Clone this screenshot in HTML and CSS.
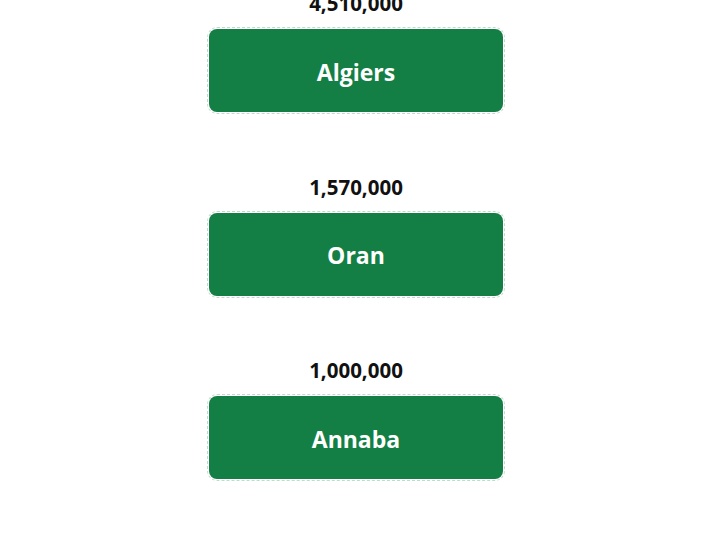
FILE: index.html
```html
<!DOCTYPE html>
<html lang="en">
<head>
    <meta charset="UTF-8">
    <meta name="viewport" content="width=device-width, initial-scale=1.0">
    <title>Cities</title>
    <link rel="stylesheet" href="styles.css">
</head>
<body>
  <div class="city-list">
    <div class="city">
      <div class="population">4,510,000</div>
      <button class="city-btn">Algiers</button>
    </div>

    <div class="city">
      <div class="population">1,570,000</div>
      <button class="city-btn">Oran</button>
    </div>

    <div class="city">
      <div class="population">1,000,000</div>
      <button class="city-btn">Annaba</button>
    </div>
  </div>
</body>
</html>
```

FILE: styles.css
```css
* {
    margin: 0;
    padding: 0;
    box-sizing: border-box;
}

body {
    font-family: 'Open Sans', 'Noto Sans', sans-serif;
    background: #ffffff;
    color: #111111;
    overflow: hidden;
}

.city-list {
    display: flex;
    flex-direction: column;
    align-items: center;
    margin-top: -9px;
    padding-left: 2px;
}

.city {
    display: flex;
    flex-direction: column;
    align-items: center;
    padding-bottom: 62.5px;
}

.population {
    font-size: 20.5px;
    font-weight: 700;
    line-height: 24px;
    margin-bottom: 14px;
}

.city-btn {
    width: 294px;
    height: 83px;
    padding-top: 2px;
    font-family: inherit;
    font-size: 23px;
    font-weight: 700;
    color: #ffffff;
    background: #137f45;
    border: none;
    border-radius: 8px;
    outline: 1px dashed #c3d9cd;
    outline-offset: 1px;
    cursor: pointer;
}
```
